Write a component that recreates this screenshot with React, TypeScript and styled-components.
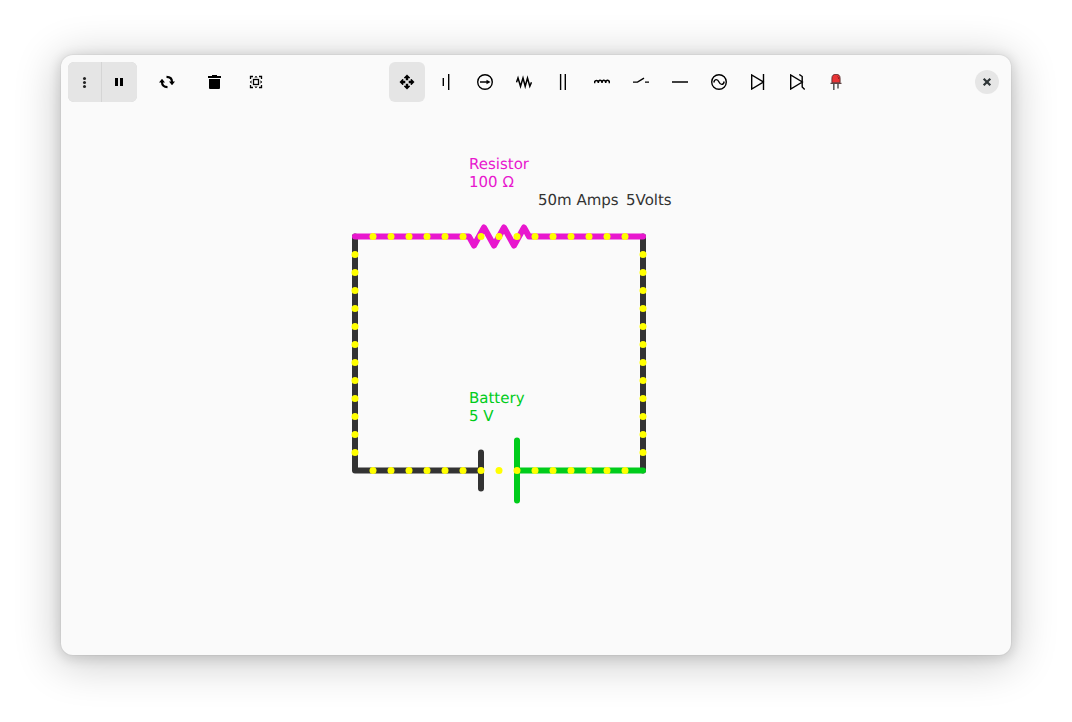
import React from "react";
import styled, { createGlobalStyle } from "styled-components";

const GlobalStyle = createGlobalStyle`
  *, *::before, *::after { box-sizing: border-box; }
  html, body { margin: 0; background: #ffffff; }
  body { font-family: "DejaVu Sans", sans-serif; color: #333333; }
`;

const Desktop = styled.div`
  display: flex;
  min-height: 100vh;
  padding: 55px 61px 67px;
`;

const Window = styled.main`
  display: flex;
  flex: 1;
  flex-direction: column;
  min-width: 0;
  overflow: hidden;
  border-radius: 12px;
  background: #fafafa;
  box-shadow:
    0 0 0 1px rgba(0, 0, 0, 0.03),
    0 2px 12px 2px rgba(0, 0, 0, 0.12),
    0 6px 44px 4px rgba(0, 0, 0, 0.2);
`;

const HeaderBar = styled.header`
  display: flex;
  align-items: center;
  padding: 7px 12px 7px 7px;
`;

const Actions = styled.div`
  display: flex;
  align-items: center;
  gap: 13px;
`;

const LinkedButtons = styled.div`
  display: flex;
  gap: 1px;
  overflow: hidden;
  border-radius: 6px;
  background: #d5d5d5;
`;

const ButtonPair = styled.div`
  display: flex;
  gap: 8px;
`;

const Tools = styled.div`
  display: flex;
  flex: 1;
  justify-content: center;
  gap: 3px;
  padding: 0 12px 0 6px;
`;

const IconButton = styled.button<{ $filled?: boolean; $width?: number; $linked?: boolean }>`
  display: flex;
  align-items: center;
  justify-content: center;
  width: ${(p) => p.$width ?? 34}px;
  height: 40px;
  padding: 0;
  border: 0;
  border-radius: ${(p) => (p.$linked ? 0 : 6)}px;
  background: ${(p) => (p.$filled ? "#e5e5e5" : "transparent")};
  color: #000000;
`;

const CloseButton = styled.button`
  display: flex;
  align-items: center;
  justify-content: center;
  width: 24px;
  height: 24px;
  padding: 0;
  border: 0;
  border-radius: 50%;
  background: #e6e6e6;
  color: #2e3436;
`;

const Canvas = styled.svg`
  display: block;
  flex: 1;
  width: 100%;
  min-height: 420px;
`;

const Label = styled.text`
  font-family: "DejaVu Sans", sans-serif;
  font-size: 15px;
  text-rendering: geometricPrecision;
`;

const Icon = ({ children }: { children: React.ReactNode }) => (
  <svg width="16" height="16" viewBox="0 0 16 16" fill="none" stroke="currentColor" strokeWidth="1.4" aria-hidden="true">
    {children}
  </svg>
);

const solid = { fill: "currentColor", stroke: "none" };

const MenuIcon = () => (
  <Icon>
    <g {...solid} fill="#222222">
      <circle cx="7.5" cy="4.5" r="1.5" />
      <circle cx="7.5" cy="8.5" r="1.5" />
      <circle cx="7.5" cy="12.5" r="1.5" />
    </g>
  </Icon>
);

const PauseIcon = () => (
  <Icon>
    <path {...solid} d="M3 4h3v8H3zM8 4h3v8H8z" />
  </Icon>
);

const RestartIcon = () => (
  <Icon>
    <path d="M7.500 2.900c3.600 0 5.500 1.800 5.500 5.100M8.500 13.100C4.900 13.100 3 11.300 3 8" strokeWidth="2.200" />
    <path {...solid} d="M10 7.600h6L13 11.200zM0 8.400h6L3 4.800z" />
  </Icon>
);

const TrashIcon = () => (
  <Icon>
    <path {...solid} d="M6 1h5v1h4v2H2V2h4zM3 5h11v9q0 1-1 1H4q-1 0-1-1z" />
  </Icon>
);

const FitIcon = () => (
  <Icon>
    <rect x="5.500" y="5.500" width="5" height="5" strokeWidth="1.300" />
    <path d="M2.500 5V2.500H5M11 2.500h2.500V5M13.500 11v2.500H11M5 13.500H2.500V11" strokeWidth="1.300" />
    <path {...solid} d="M6.300 3.500 8 1.800l1.700 1.700zM6.300 12.500 8 14.200l1.700-1.700zM3.500 6.300 1.800 8l1.700 1.700zM12.500 6.300 14.200 8l-1.700 1.700z" />
  </Icon>
);

const MoveIcon = () => (
  <Icon>
    <path
      {...solid}
      d="M8 .5 11 3.500V4.300H9.200v2H6.800v-2H5v-.8zM8 15.500l3-3v-.8H9.200v-2H6.800v2H5v.8zM.5 8l3-3h.8v1.800h2v2.400h-2V11h-.8zM15.500 8l-3-3h-.8v1.800h-2v2.400h2V11h.8z"
    />
  </Icon>
);

const BatteryIcon = () => (
  <Icon>
    <path d="M5.300 4v8M10.700 0v16" />
  </Icon>
);

const CurrentIcon = () => (
  <Icon>
    <circle cx="8" cy="8" r="7.300" />
    <path d="M3 8h7" />
    <path {...solid} d="M9.500 5.700 13.500 8l-4 2.300z" />
  </Icon>
);

const ResistorIcon = () => (
  <Icon>
    <path d="M.5 8.300 2 4l2.500 8.300L7 4l2.200 8.300L11.500 4l2.300 8.300L15.500 8.300" strokeWidth="1.500" />
  </Icon>
);

const CapacitorIcon = () => (
  <Icon>
    <path d="M5.600 0v16M10.300 0v16" />
  </Icon>
);

const InductorIcon = () => (
  <Icon>
    <path d="M.6 9.300V8a1.900 2 0 0 1 3.700 0v1a1.900 2.500 0 0 1 3.700-1v1a1.900 2.500 0 0 1 3.700-1v1a1.900 2.500 0 0 1 3.700-1v1.300" strokeWidth="1.600" />
  </Icon>
);

const SwitchIcon = () => (
  <Icon>
    <path d="M0 8.100h4.500l6.500-4M12 8.100h4" strokeWidth="1.400" />
  </Icon>
);

const WireIcon = () => (
  <Icon>
    <path d="M0 8h16" strokeWidth="1.400" />
  </Icon>
);

const AcSourceIcon = () => (
  <Icon>
    <circle cx="8" cy="8" r="7.300" />
    <path d="M2.800 8.500C3.500 4.800 6.600 4.800 8 8s4.500 3.200 5.200-.5" />
  </Icon>
);

const DiodeIcon = () => (
  <Icon>
    <path d="M1.700 1v14L13.300 8zM13.500 0v16" />
  </Icon>
);

const ZenerIcon = () => (
  <Icon>
    <path d="M1.700 1v14L13.300 8zM10.300.5 13.200 2.500v10.500l2.500 2.500" />
  </Icon>
);

const LedIcon = () => (
  <Icon>
    <path d="M5.800 10v6M10 10v4.500" stroke="#5e5e5e" strokeWidth="1.600" />
    <path d="M3.900 8.800V4.200a4.100 3.900 0 0 1 8.200 0v4.600z" fill="#e93436" stroke="#4a2525" strokeWidth=".8" />
    <path d="M9.500 2.500q1.200.8 1.200 2.500" stroke="#8f1f22" strokeWidth="1" />
    <path d="M2.500 9.300h11" stroke="#5e4444" strokeWidth="1.300" />
  </Icon>
);

const CloseIcon = () => (
  <Icon>
    <path d="m4.700 4.700 6.600 6.600M11.300 4.700l-6.600 6.600" strokeWidth="2.200" />
  </Icon>
);

const tools = [
  { name: "Move", Drawing: MoveIcon },
  { name: "Battery", Drawing: BatteryIcon },
  { name: "Current source", Drawing: CurrentIcon },
  { name: "Resistor", Drawing: ResistorIcon },
  { name: "Capacitor", Drawing: CapacitorIcon },
  { name: "Inductor", Drawing: InductorIcon },
  { name: "Switch", Drawing: SwitchIcon },
  { name: "Wire", Drawing: WireIcon },
  { name: "AC source", Drawing: AcSourceIcon },
  { name: "Diode", Drawing: DiodeIcon },
  { name: "Zener diode", Drawing: ZenerIcon },
  { name: "LED", Drawing: LedIcon },
];

// The circuit snaps to an 18px grid: 16 cells across, 13 cells down.
const CELL = 18;
const COLS = 16;
const ROWS = 13;
const WIDTH = COLS * CELL;
const HEIGHT = ROWS * CELL;

const charges: [number, number][] = [];
for (let c = 1; c < COLS; c++) charges.push([c * CELL, 0], [c * CELL, HEIGHT]);
for (let r = 1; r < ROWS; r++) charges.push([0, r * CELL], [WIDTH, r * CELL]);

const wireColor = "#333333";
const selected = "#e817ce";
const positive = "#00cc1b";

const Circuit = () => (
  <Canvas role="img" aria-label="Battery and resistor circuit">
    <g transform="translate(294 127.5)">
      <g fill="none" strokeWidth="6" strokeLinecap="round" strokeLinejoin="round">
        <path stroke={wireColor} d={`M0 0V${HEIGHT}H126M126 ${HEIGHT - 18}v36M${WIDTH} 0V${HEIGHT}`} />
        <path stroke={positive} d={`M162 ${HEIGHT - 30}v60M162 ${HEIGHT}H${WIDTH}`} />
        <path stroke={selected} d={`M0 0H114L119 9 129-9 139 9 149-9 159 9 169-9 174 0H${WIDTH}`} />
      </g>
      <g fill="#ffff00">
        {charges.map(([x, y]) => (
          <circle key={`${x}-${y}`} cx={x} cy={y} r="3.500" />
        ))}
      </g>
    </g>
    <Label x="408" y="60" fill={selected}>Resistor</Label>
    <Label x="408" y="78" fill={selected}>100 Ω</Label>
    <Label x="477" y="96" fill={wireColor}>50m Amps</Label>
    <Label x="565" y="96" fill={wireColor}>5Volts</Label>
    <Label x="408" y="294" fill={positive}>Battery</Label>
    <Label x="408" y="312" fill={positive}>5 V</Label>
  </Canvas>
);

export default function App() {
  return (
    <>
      <GlobalStyle />
      <Desktop>
        <Window>
          <HeaderBar>
            <Actions>
              <LinkedButtons>
                <IconButton $filled $linked $width={33} aria-label="Menu"><MenuIcon /></IconButton>
                <IconButton $filled $linked $width={35} aria-label="Pause"><PauseIcon /></IconButton>
              </LinkedButtons>
              <IconButton aria-label="Restart"><RestartIcon /></IconButton>
              <ButtonPair>
                <IconButton aria-label="Delete"><TrashIcon /></IconButton>
                <IconButton aria-label="Zoom to fit"><FitIcon /></IconButton>
              </ButtonPair>
            </Actions>
            <Tools role="toolbar" aria-label="Components">
              {tools.map(({ name, Drawing }, i) => (
                <IconButton key={name} $width={36} $filled={i === 0} aria-label={name} aria-pressed={i === 0}>
                  <Drawing />
                </IconButton>
              ))}
            </Tools>
            <CloseButton aria-label="Close"><CloseIcon /></CloseButton>
          </HeaderBar>
          <Circuit />
        </Window>
      </Desktop>
    </>
  );
}
